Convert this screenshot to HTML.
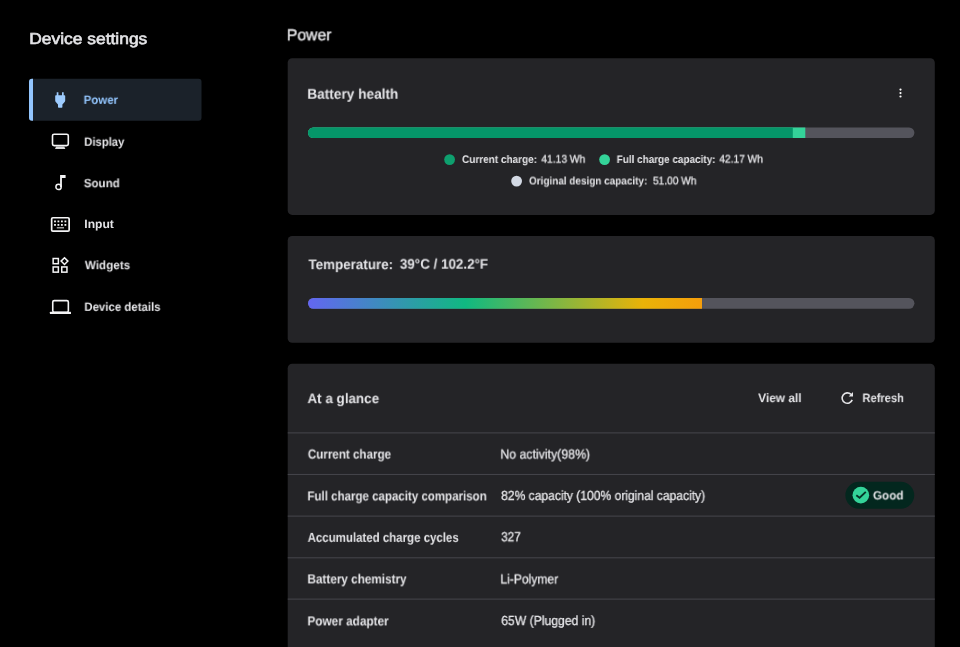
<!DOCTYPE html>
<html lang="en">
<head>
<meta charset="utf-8">
<title>Device settings - Power</title>
<style>
*{box-sizing:border-box;margin:0;padding:0}
html,body{width:960px;height:647px;overflow:hidden;background:#000}
body{font-family:"Liberation Sans",Arial,sans-serif;color:#e4e4e7;position:relative}
.t{text-rendering:geometricPrecision;will-change:transform;position:absolute;white-space:nowrap;line-height:20px;transform-origin:0 50%;display:block;color:#e4e4e7;text-decoration:none}
svg{position:absolute;overflow:visible}
.gfx{left:0;top:0;pointer-events:none}
#n1{color:#93c5fd}
span.t,dd.t{-webkit-text-stroke:.3px #e4e4e7}
#tp2,#gd{-webkit-text-stroke:0}
#st{-webkit-text-stroke:.6px #e4e4e7}
#mt{-webkit-text-stroke:.4px #e4e4e7}
#st{left:29px;top:30px;font-size:15.8px;font-weight:400;transform:translate(0.20px,0.38px) scaleX(1.1024)}
#mt{left:286px;top:26px;font-size:16px;font-weight:400;transform:translate(0.78px,0.28px) scaleX(0.9850)}
#n1{left:83px;top:89px;font-size:12px;font-weight:700;transform:translate(0.66px,0.84px) scaleX(0.9554)}
#n2{left:84px;top:131px;font-size:12px;font-weight:700;transform:translate(0.16px,0.78px) scaleX(0.9416)}
#n3{left:83px;top:173px;font-size:12px;font-weight:700;transform:translate(0.78px,0.21px) scaleX(0.9618)}
#n4{left:84px;top:214px;font-size:12px;font-weight:700;transform:translate(0.30px,0.20px) scaleX(1.0075)}
#n5{left:84px;top:255px;font-size:12px;font-weight:700;transform:translate(0.86px,0.18px) scaleX(0.9701)}
#n6{left:84px;top:296px;font-size:12px;font-weight:700;transform:translate(0.31px,0.84px) scaleX(0.9529)}
#bh{left:307px;top:84px;font-size:14.3px;font-weight:700;transform:translate(0.28px,0.74px) scaleX(0.9556)}
#l1a{left:462px;top:149px;font-size:11px;font-weight:700;transform:translate(0.00px,0.95px) scaleX(0.9094)}
#l1b{left:541px;top:149px;font-size:11px;font-weight:400;transform:translate(0.37px,0.57px) scaleX(0.9316)}
#l2a{left:616px;top:149px;font-size:11px;font-weight:700;transform:translate(0.70px,0.97px) scaleX(0.9025)}
#l2b{left:719px;top:149px;font-size:11px;font-weight:400;transform:translate(0.39px,0.55px) scaleX(0.9239)}
#l3a{left:529px;top:171px;font-size:11px;font-weight:700;transform:translate(0.00px,0.46px) scaleX(0.9042)}
#l3b{left:653px;top:171px;font-size:11px;font-weight:400;transform:translate(0.00px,0.34px) scaleX(0.9222)}
#tp1{left:308px;top:254px;font-size:14px;font-weight:700;transform:translate(0.49px,0.15px) scaleX(0.9565)}
#tp2{left:399px;top:253px;font-size:14px;font-weight:700;transform:translate(0.88px,0.65px) scaleX(0.9576)}
#ag{left:307px;top:388px;font-size:14px;font-weight:700;transform:translate(0.45px,0.13px) scaleX(0.9590)}
#va{left:758px;top:388px;font-size:12.3px;font-weight:700;transform:translate(0.15px,0.08px) scaleX(0.9653)}
#rf{left:862px;top:388px;font-size:12.3px;font-weight:700;transform:translate(0.40px,0.08px) scaleX(0.9060)}
#gd{left:872px;top:485px;font-size:12px;font-weight:700;transform:translate(0.89px,0.38px) scaleX(0.9772)}
#r1a{left:307px;top:444px;font-size:13.2px;font-weight:700;transform:translate(0.84px,0.55px) scaleX(0.8798)}
#r2a{left:307px;top:486px;font-size:13.2px;font-weight:700;transform:translate(0.44px,0.41px) scaleX(0.8734)}
#r3a{left:307px;top:527px;font-size:13.2px;font-weight:700;transform:translate(0.64px,0.83px) scaleX(0.8695)}
#r4a{left:307px;top:569px;font-size:13.2px;font-weight:700;transform:translate(0.44px,0.43px) scaleX(0.8898)}
#r5a{left:307px;top:611px;font-size:13.2px;font-weight:700;transform:translate(0.44px,0.42px) scaleX(0.8937)}
#r1b{left:500px;top:444px;font-size:13.2px;font-weight:400;transform:translate(0.31px,0.52px) scaleX(0.9355)}
#r2b{left:501px;top:485px;font-size:13.2px;font-weight:400;transform:translate(0.15px,0.91px) scaleX(0.9153)}
#r3b{left:501px;top:527px;font-size:13.2px;font-weight:400;transform:translate(0.25px,0.21px) scaleX(0.8806)}
#r4b{left:500px;top:569px;font-size:13.2px;font-weight:400;transform:translate(0.31px,0.45px) scaleX(0.9185)}
#r5b{left:501px;top:610px;font-size:13.2px;font-weight:400;transform:translate(0.24px,0.94px) scaleX(0.9218)}
</style>
</head>
<body>
<aside>
  <h1 class="t" id="st">Device settings</h1>
  <nav>
    <svg class="gfx" width="960" height="647" viewBox="0 0 960 647">
      <rect x="29" y="78.800" width="172.500" height="42" rx="3" fill="#1b222a"/>
      <path d="M33 78.800h-1a3 3 0 0 0-3 3v36a3 3 0 0 0 3 3h1z" fill="#93c5fd"/>
    </svg>
    <svg style="left:50px;top:90px" width="20" height="20" viewBox="0 0 20 20"><path fill="#9dcbfd" d="M6.700 2.200h1.700v3h3.600v-3h1.700v3h.8q.7 0 .7.700v4.600q0 1-.8 1.700l-2 2.200v2.600q0 .7-.7.700h-3q-.7 0-.7-.7v-2.600l-2-2.200q-.8-.7-.8-1.700v-4.600q0-.7.700-.7h.8z"/></svg>
    <a class="t" id="n1" href="#power">Power</a>
    <svg style="left:50px;top:131px" width="20" height="20" viewBox="0 0 20 20"><rect x="2.500" y="3.200" width="15.800" height="11.400" rx="1.600" fill="none" stroke="#f4f4f5" stroke-width="1.600"/><path fill="#d8d8da" d="M6.100 15.400h8.100l1.200 2.600h-10.400z"/></svg>
    <a class="t" id="n2" href="#display">Display</a>
    <svg style="left:50px;top:172px" width="20" height="20" viewBox="0 0 20 20"><circle cx="8.550" cy="14.950" r="2.650" fill="none" stroke="#f4f4f5" stroke-width="1.500"/><path fill="#f4f4f5" d="M10.100 3.100h5.500v3h-3.700v8.900h-1.800z"/></svg>
    <a class="t" id="n3" href="#sound">Sound</a>
    <svg style="left:50px;top:214px" width="20" height="20" viewBox="0 0 20 20"><rect x="1.650" y="3.750" width="17.500" height="13.350" rx="1.200" fill="none" stroke="#f4f4f5" stroke-width="1.700"/><g fill="#f4f4f5"><rect x="4.100" y="6.500" width="1.800" height="1.800"/><rect x="7.500" y="6.500" width="1.800" height="1.800"/><rect x="11" y="6.500" width="1.800" height="1.800"/><rect x="14.500" y="6.500" width="1.800" height="1.800"/><rect x="4.100" y="10" width="1.800" height="1.800"/><rect x="7.500" y="10" width="1.800" height="1.800"/><rect x="11" y="10" width="1.800" height="1.800"/><rect x="14.500" y="10" width="1.800" height="1.800"/><rect x="6.800" y="13.200" width="7.200" height="1.200" opacity=".8"/></g></svg>
    <a class="t" id="n4" href="#input">Input</a>
    <svg style="left:50px;top:252px" width="20" height="24" viewBox="0 0 20 24"><g fill="none" stroke="#f4f4f5" stroke-width="1.500"><rect x="3.150" y="6.500" width="5.200" height="5.200"/><rect x="3.150" y="14.950" width="5.200" height="5.200"/><rect x="11.750" y="14.950" width="5.200" height="5.200"/><path d="M14.500 5.700l3.400 3.400-3.400 3.400-3.400-3.400z"/></g></svg>
    <a class="t" id="n5" href="#widgets">Widgets</a>
    <svg style="left:50px;top:296px" width="20" height="20" viewBox="0 0 20 20"><rect x="2.750" y="4.600" width="15.600" height="11.600" rx="1.500" fill="none" stroke="#f4f4f5" stroke-width="1.600"/><rect x="-0.100" y="15.800" width="21.100" height="2.150" rx=".5" fill="#f4f4f5"/></svg>
    <a class="t" id="n6" href="#details">Device details</a>
  </nav>
</aside>

<main>
  <h2 class="t" id="mt">Power</h2>

  <section id="battery-health">
    <svg class="gfx" width="960" height="647" viewBox="0 0 960 647">
      <defs><clipPath id="cp1"><rect x="308" y="127.500" width="606.400" height="10.500" rx="5.250"/></clipPath></defs>
      <rect x="287.700" y="58.200" width="647.100" height="156.700" rx="4.500" fill="#242427"/>
      <g clip-path="url(#cp1)">
        <rect x="308" y="127" width="607" height="12" fill="#54545c"/>
        <rect x="308" y="127" width="497.300" height="12" fill="#34d399"/>
        <rect x="308" y="127" width="484.800" height="12" fill="#059669"/>
      </g>
      <circle cx="449.600" cy="159.600" r="5.400" fill="#0e9f6e"/>
      <circle cx="604.600" cy="159.600" r="5.400" fill="#34d399"/>
      <circle cx="516.600" cy="181.100" r="5.400" fill="#d3d9e4"/>
      <g fill="#fafafa"><circle cx="900.500" cy="89.600" r="1.100"/><circle cx="900.500" cy="93.100" r="1.100"/><circle cx="900.500" cy="96.500" r="1.100"/></g>
    </svg>
    <h3 class="t" id="bh">Battery health</h3>
    <b class="t" id="l1a">Current charge:</b><span class="t" id="l1b">41.13 Wh</span>
    <b class="t" id="l2a">Full charge capacity:</b><span class="t" id="l2b">42.17 Wh</span>
    <b class="t" id="l3a">Original design capacity:</b><span class="t" id="l3b">51.00 Wh</span>
  </section>

  <section id="temperature">
    <svg class="gfx" width="960" height="647" viewBox="0 0 960 647">
      <defs>
        <clipPath id="cp2"><rect x="308" y="298" width="606.400" height="10.700" rx="5.350"/></clipPath>
        <linearGradient id="tg" gradientUnits="userSpaceOnUse" x1="308" y1="0" x2="702" y2="0">
          <stop offset="0" stop-color="#6366f1"/><stop offset=".4" stop-color="#10b981"/><stop offset=".85" stop-color="#eab308"/><stop offset="1" stop-color="#f59e0b"/>
        </linearGradient>
      </defs>
      <rect x="287.700" y="235.900" width="647.100" height="106.800" rx="4.500" fill="#242427"/>
      <g clip-path="url(#cp2)">
        <rect x="308" y="297" width="607" height="13" fill="#54545c"/>
        <rect x="308" y="297" width="394" height="13" fill="url(#tg)"/>
      </g>
    </svg>
    <h3 class="t" id="tp1">Temperature:</h3><span class="t" id="tp2">39°C / 102.2°F</span>
  </section>

  <section id="at-a-glance">
    <svg class="gfx" width="960" height="647" viewBox="0 0 960 647">
      <rect x="287.700" y="363.700" width="647.100" height="300" rx="4.500" fill="#242427"/>
      <g fill="#46464c">
        <rect x="287.700" y="432.400" width="647.100" height="1"/>
        <rect x="287.700" y="473.950" width="647.100" height="1"/>
        <rect x="287.700" y="515.600" width="647.100" height="1"/>
        <rect x="287.700" y="557.300" width="647.100" height="1"/>
        <rect x="287.700" y="598.600" width="647.100" height="1"/>
      </g>
      <path d="M852.200 399.900A5.200 5.200 0 1 1 851 394.400" fill="none" stroke="#e4e4e7" stroke-width="1.600"/><path d="M853 392.100v4.500h-4.300z" fill="#e4e4e7"/>
      <rect x="845.400" y="481.700" width="68.800" height="27.050" rx="13.500" fill="#03271e"/>
      <circle cx="860.850" cy="495.150" r="8.300" fill="#34d399"/><path d="M856.300 495.200l3.300 2.600 6.200-5.900" fill="none" stroke="#053326" stroke-width="1.900"/>
    </svg>
    <h3 class="t" id="ag">At a glance</h3>
    <a class="t" id="va" href="#all">View all</a>
    <a class="t" id="rf" href="#refresh">Refresh</a>
    <dl>
      <dt class="t" id="r1a">Current charge</dt><dd class="t" id="r1b">No activity(98%)</dd>
      <dt class="t" id="r2a">Full charge capacity comparison</dt><dd class="t" id="r2b">82% capacity (100% original capacity)</dd>
      <dd class="t" id="gd">Good</dd>
      <dt class="t" id="r3a">Accumulated charge cycles</dt><dd class="t" id="r3b">327</dd>
      <dt class="t" id="r4a">Battery chemistry</dt><dd class="t" id="r4b">Li-Polymer</dd>
      <dt class="t" id="r5a">Power adapter</dt><dd class="t" id="r5b">65W (Plugged in)</dd>
    </dl>
  </section>
</main>
</body>
</html>
